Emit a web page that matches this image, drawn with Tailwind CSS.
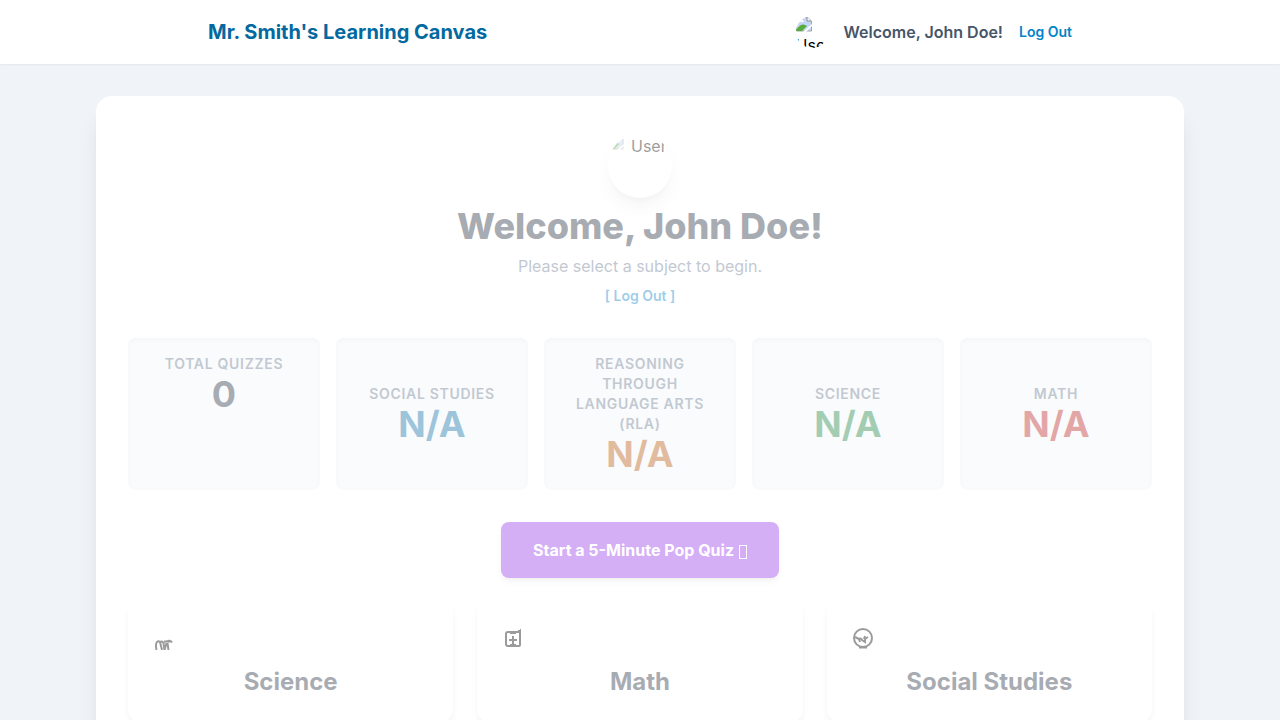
<!DOCTYPE html>
<html lang="en">
<head>
<meta charset="UTF-8">
<meta name="viewport" content="width=device-width, initial-scale=1.0">
<title>Mr. Smith's Learning Canvas</title>
<script src="https://cdn.jsdelivr.net/npm/@tailwindcss/browser@4"></script>
</head>
<body class="min-h-screen overflow-x-hidden bg-[#f0f4f9] font-['Inter',sans-serif] text-[#1e293b]">
<header class="bg-white shadow-xs">
  <div class="mx-auto flex h-16 max-w-4xl items-center justify-between px-4">
    <div class="text-xl font-bold text-[#0369a1]">Mr. Smith's Learning Canvas</div>
    <div class="flex items-center gap-4">
      <div class="size-8 overflow-hidden rounded-full text-base leading-5 text-black">
        <svg class="block size-4" viewBox="0 0 16 16" aria-hidden="true"><path d="M.5 1h10.500l4.500 4v10H.5z" fill="#c5d7f5" stroke="#a3a3a3"/><path d="M11 1v4h4" fill="#fff" stroke="#8b8b8b"/><path d="M2 6q0-2 2-2 3-1 4 2z" fill="#fff"/><path d="M0 15v-1q5-7 9-5l2 1-5 5z" fill="#55ad3b"/><path d="M7 16l9-8v2l-6 6z" fill="#fff"/></svg>
        <span class="block pt-[3px]">User</span>
      </div>
      <span class="font-semibold text-[#475569]">Welcome, John Doe!</span>
      <a href="#" class="text-sm font-semibold text-[#0284c7]">Log Out</a>
    </div>
  </div>
</header>
<main class="mx-auto max-w-6xl p-8">
  <div class="rounded-2xl bg-white px-8 pt-[38px] pb-8 shadow-xl">
    <div class="opacity-39">
      <section class="flex flex-col items-center text-center">
        <div class="flex size-16 items-start overflow-hidden rounded-full text-left shadow-lg">
          <svg class="block size-4 shrink-0" viewBox="0 0 16 16" aria-hidden="true"><path d="M1 1h10l4 4v10H1z" fill="#c5d7f5" stroke="#a3a3a3"/><path d="M11 1v4h4" fill="#fff" stroke="#8b8b8b"/><path d="M1.500 15v-1q5-7 8-5l2 1-5 5z" fill="#55ad3b"/><path d="M9 16l7-6v2l-4 4z" fill="#fff"/></svg>
          <span class="pl-[7px] leading-6 text-black">User</span>
        </div>
        <h1 class="mt-2 text-4xl font-extrabold">Welcome, John Doe!</h1>
        <p class="mt-2 text-[#64748b]">Please select a subject to begin.</p>
        <a href="#" class="mt-2 text-sm font-semibold text-[#0284c7]">[ Log Out ]</a>
      </section>
      <section class="mt-8 grid grid-cols-5 gap-4 text-center">
        <div class="rounded-lg bg-[#f1f5f9] p-4 inset-shadow-sm">
          <h2 class="text-sm font-semibold tracking-wider text-[#64748b] uppercase">Total Quizzes</h2>
          <p class="text-4xl font-bold">0</p>
        </div>
        <div class="flex flex-col justify-center rounded-lg bg-[#f1f5f9] p-4 inset-shadow-sm">
          <h2 class="text-sm font-semibold tracking-wider text-[#64748b] uppercase">Social Studies</h2>
          <p class="text-4xl font-bold text-[#0369a1]">N/A</p>
        </div>
        <div class="flex flex-col justify-center rounded-lg bg-[#f1f5f9] p-4 inset-shadow-sm">
          <h2 class="text-sm font-semibold tracking-wider text-[#64748b] uppercase">Reasoning Through Language Arts (RLA)</h2>
          <p class="text-4xl font-bold text-[#b45309]">N/A</p>
        </div>
        <div class="flex flex-col justify-center rounded-lg bg-[#f1f5f9] p-4 inset-shadow-sm">
          <h2 class="text-sm font-semibold tracking-wider text-[#64748b] uppercase">Science</h2>
          <p class="text-4xl font-bold text-[#15803d]">N/A</p>
        </div>
        <div class="flex flex-col justify-center rounded-lg bg-[#f1f5f9] p-4 inset-shadow-sm">
          <h2 class="text-sm font-semibold tracking-wider text-[#64748b] uppercase">Math</h2>
          <p class="text-4xl font-bold text-[#b91c1c]">N/A</p>
        </div>
      </section>
      <div class="mt-8 flex justify-center">
        <button type="button" class="rounded-lg bg-[#9333ea] px-8 py-4 font-bold text-white shadow-md">Start a 5-Minute Pop Quiz <span class="ml-px inline-block h-[14px] w-2 border border-white align-[-3px]"></span></button>
      </div>
      <section class="mt-6 grid grid-cols-3 gap-6">
        <button type="button" class="rounded-xl bg-white p-6 text-center shadow-md">
          <svg class="mb-4 block size-6 text-black" viewBox="0 0 24 24" fill="none" stroke="currentColor" stroke-width="2" aria-hidden="true"><path d="M4.500 24c-.8-4-.7-7 .5-8 1-1 2-1 3 0l2 8M8 16c2-1 3 0 3.500 1l1 7M12.500 24l2-7M15.500 17l1 7M14 16c2-2 5-1.500 6 .5M12 15.500h7"/></svg>
          <h2 class="text-2xl font-bold">Science</h2>
        </button>
        <button type="button" class="rounded-xl bg-white p-6 text-center shadow-md">
          <svg class="mb-4 block size-6 text-black" viewBox="0 0 24 24" fill="none" stroke="currentColor" stroke-width="2" aria-hidden="true"><path d="M7 6h11l1-1v14q0 1-1 1H7q-2 0-2-2V8q0-2 2-2M9 7h6M12 10v9M8 14h8M9 19h6M17 5h2"/></svg>
          <h2 class="text-2xl font-bold">Math</h2>
        </button>
        <button type="button" class="rounded-xl bg-white p-6 text-center shadow-md">
          <svg class="mb-4 block size-6 text-black" viewBox="0 0 24 24" fill="none" stroke="currentColor" stroke-width="2" aria-hidden="true"><circle cx="12" cy="12" r="9"/><path d="M4 11l4 2 1 3M8 13q2-1 3 1l3 2v-3l3-2M14 10l-1 3M8 21.500h8"/></svg>
          <h2 class="text-2xl font-bold">Social Studies</h2>
        </button>
      </section>
    </div>
  </div>
</main>
</body>
</html>
